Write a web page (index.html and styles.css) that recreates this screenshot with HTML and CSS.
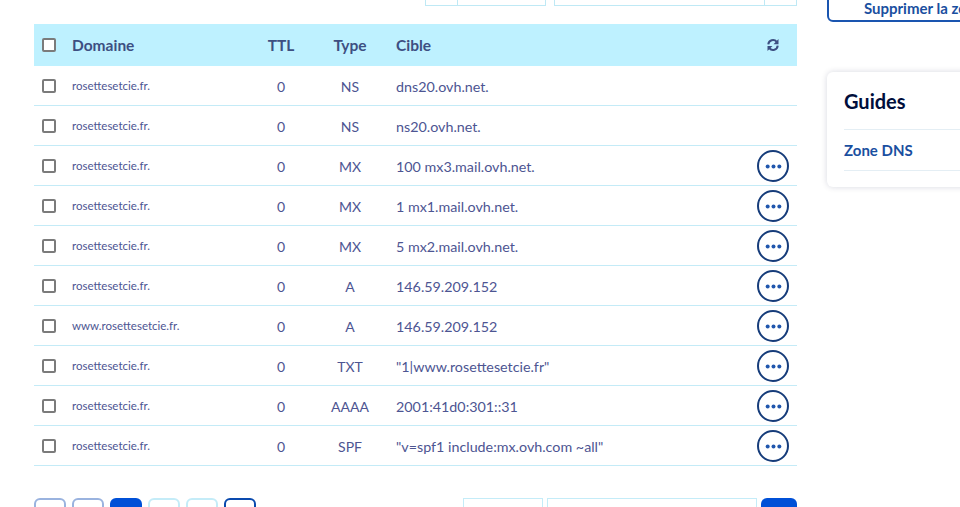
FILE: index.html
```html
<!DOCTYPE html>
<html lang="fr">
<head>
    <meta charset="UTF-8">
    <title>Zone DNS</title>
    <link rel="stylesheet" href="styles.css">
</head>
<body>
    <div class="page">
        <main class="content">
            <div class="toolbar">
                <div class="select-group">
                    <span class="select-icon"></span>
                    <span class="select-value"></span>
                </div>
                <div class="search-group">
                    <span class="search-input"></span>
                    <span class="search-btn"></span>
                </div>
            </div>

            <div class="dns-table">
                <div class="row head">
                    <div class="cell check"><span class="checkbox"></span></div>
                    <div class="cell">Domaine</div>
                    <div class="cell center">TTL</div>
                    <div class="cell center">Type</div>
                    <div class="cell">Cible</div>
                    <div class="cell action">
                        <svg class="refresh" viewBox="0 0 16 16" width="14" height="14">
                            <path d="M2.6 7.2A5.4 5.4 0 0 1 12.2 4.4" fill="none" stroke="#3d4f82" stroke-width="2.3"/>
                            <polygon points="14.3,1.2 14.3,7 8.6,7" fill="#3d4f82"/>
                            <path d="M13.4 8.8A5.4 5.4 0 0 1 3.8 11.6" fill="none" stroke="#3d4f82" stroke-width="2.3"/>
                            <polygon points="1.7,14.8 1.7,9 7.4,9" fill="#3d4f82"/>
                        </svg>
                    </div>
                </div>
                <div id="rows"></div>
            </div>

            <div class="footer-bar">
                <div class="pager">
                    <span class="page-btn disabled"></span>
                    <span class="page-btn disabled"></span>
                    <span class="page-btn current"></span>
                    <span class="page-btn light"></span>
                    <span class="page-btn light"></span>
                    <span class="page-btn dark"></span>
                </div>
                <div class="per-page">
                    <span class="box small"></span>
                    <span class="box wide"></span>
                    <span class="go-btn"></span>
                </div>
            </div>
        </main>

        <aside class="side">
            <button class="outline-btn">Supprimer la zone DNS</button>
            <div class="guides">
                <h2>Guides</h2>
                <a class="guide-link" href="#">Zone DNS</a>
            </div>
        </aside>
    </div>

    <script>
        const records = [
            ["rosettesetcie.fr.", "0", "NS", "dns20.ovh.net.", false],
            ["rosettesetcie.fr.", "0", "NS", "ns20.ovh.net.", false],
            ["rosettesetcie.fr.", "0", "MX", "100 mx3.mail.ovh.net.", true],
            ["rosettesetcie.fr.", "0", "MX", "1 mx1.mail.ovh.net.", true],
            ["rosettesetcie.fr.", "0", "MX", "5 mx2.mail.ovh.net.", true],
            ["rosettesetcie.fr.", "0", "A", "146.59.209.152", true],
            ["www.rosettesetcie.fr.", "0", "A", "146.59.209.152", true],
            ["rosettesetcie.fr.", "0", "TXT", "\"1|www.rosettesetcie.fr\"", true],
            ["rosettesetcie.fr.", "0", "AAAA", "2001:41d0:301::31", true],
            ["rosettesetcie.fr.", "0", "SPF", "\"v=spf1 include:mx.ovh.com ~all\"", true]
        ];

        const dots = '<svg viewBox="0 0 20 6" width="17" height="5"><circle cx="3" cy="3" r="2.4"/><circle cx="10" cy="3" r="2.4"/><circle cx="17" cy="3" r="2.4"/></svg>';

        const rows = document.getElementById("rows");
        records.forEach(([domain, ttl, type, target, editable]) => {
            const row = document.createElement("div");
            row.className = "row";
            row.innerHTML = `
                <div class="cell check"><span class="checkbox"></span></div>
                <div class="cell domain"></div>
                <div class="cell center"></div>
                <div class="cell center"></div>
                <div class="cell target"></div>
                <div class="cell action">${editable ? '<button class="more-btn">' + dots + '</button>' : ''}</div>
            `;
            const cells = row.querySelectorAll(".cell");
            cells[1].textContent = domain;
            cells[2].textContent = ttl;
            cells[3].textContent = type;
            cells[4].textContent = target;
            rows.appendChild(row);
        });
    </script>
</body>
</html>
```

FILE: styles.css
```css
/* base */
body {
    margin: 0;
    font-family: 'Lato', 'Open Sans', sans-serif;
    color: #4d5592;
    background-color: #fff;
    overflow: hidden;
}

.page {
    display: flex;
    align-items: flex-start;
    margin-top: -34px;
}

/* colonne principale */
.content {
    width: 763px;
    flex-shrink: 0;
    margin-left: 34px;
}

.toolbar {
    display: flex;
    justify-content: flex-end;
    gap: 8px;
    height: 41px;
    margin-bottom: 17px;
}

.select-group,
.search-group {
    display: flex;
    height: 40px;
}

.select-group span,
.search-group span {
    border: 1px solid #bfe9f5;
    border-left-width: 0;
}

.select-group span:first-child,
.search-group span:first-child {
    border-left-width: 1px;
}

.select-icon { width: 31px; }
.select-value { width: 87px; }
.search-input { width: 209px; }
.search-btn { width: 31px; }

/* tableau */
.row {
    display: grid;
    grid-template-columns: 38px 178px 62px 76px 1fr 48px;
    align-items: center;
    height: 39px;
    border-bottom: 1px solid #c4ebf7;
    font-size: 14px;
    padding-top: 1px;
}

.row.head {
    height: 42px;
    padding-top: 0;
    border-bottom: none;
    background-color: #bef1ff;
    color: #3d4f82;
    font-weight: bold;
    font-size: 15.5px;
}

#rows .row {
    height: 38px;
}

.cell {
    white-space: nowrap;
}

.cell.center {
    text-align: center;
}

.cell.check {
    padding-left: 8px;
    display: flex;
}

.cell.domain {
    font-size: 11.5px;
    padding-bottom: 2px;
}

.cell:nth-child(5) {
    padding-left: 8px;
}

.cell.target {
    font-size: 14.3px;
}

.cell.action {
    display: flex;
    justify-content: center;
}

.checkbox {
    width: 10px;
    height: 10px;
    border: 2px solid #7b7b7b;
    border-radius: 2px;
    background: #fff;
}

.more-btn {
    width: 32px;
    height: 32px;
    border: 2px solid #163c7a;
    border-radius: 50%;
    background: #fff;
    padding: 0;
    display: flex;
    align-items: center;
    justify-content: center;
    fill: #1f56ad;
}

/* pagination */
.footer-bar {
    display: flex;
    justify-content: space-between;
    margin-top: 32px;
}

.pager {
    display: flex;
    gap: 6px;
}

.page-btn {
    width: 28px;
    height: 32px;
    border: 2px solid #9ab3df;
    border-radius: 6px;
}

.page-btn.current {
    background-color: #0050d7;
    border-color: #0050d7;
}

.page-btn.light {
    border-color: #c4ecf8;
}

.page-btn.dark {
    border-color: #0a4aae;
}

.per-page {
    display: flex;
    gap: 4px;
}

.box {
    height: 34px;
    border: 1px solid #c4ecf8;
}

.box.small { width: 78px; }
.box.wide { width: 208px; }

.go-btn {
    width: 36px;
    height: 36px;
    border-radius: 6px;
    background-color: #0050d7;
}

/* colonne de droite */
.side {
    margin-left: 30px;
    width: 260px;
    flex-shrink: 0;
    padding-top: 16px;
}

.outline-btn {
    display: block;
    width: 228px;
    height: 40px;
    padding: 11px 0 0;
    border: 2px solid #1a55b0;
    border-radius: 6px;
    background: #fff;
    color: #1a4fa0;
    font-family: inherit;
    font-weight: bold;
    font-size: 15px;
}

.guides {
    margin-top: 50px;
    padding: 16px 17px;
    border-radius: 6px;
    box-shadow: 0 0 6px rgba(0, 20, 60, 0.16);
}

.guides h2 {
    margin: 0;
    line-height: 26px;
    font-size: 20px;
    color: #000e3c;
    padding-bottom: 15px;
    border-bottom: 1px solid #e4eef4;
}

.guide-link {
    display: block;
    line-height: 40px;
    font-weight: bold;
    font-size: 15px;
    color: #1a4fa0;
    text-decoration: none;
    border-bottom: 1px solid #e4eef4;
}
```
